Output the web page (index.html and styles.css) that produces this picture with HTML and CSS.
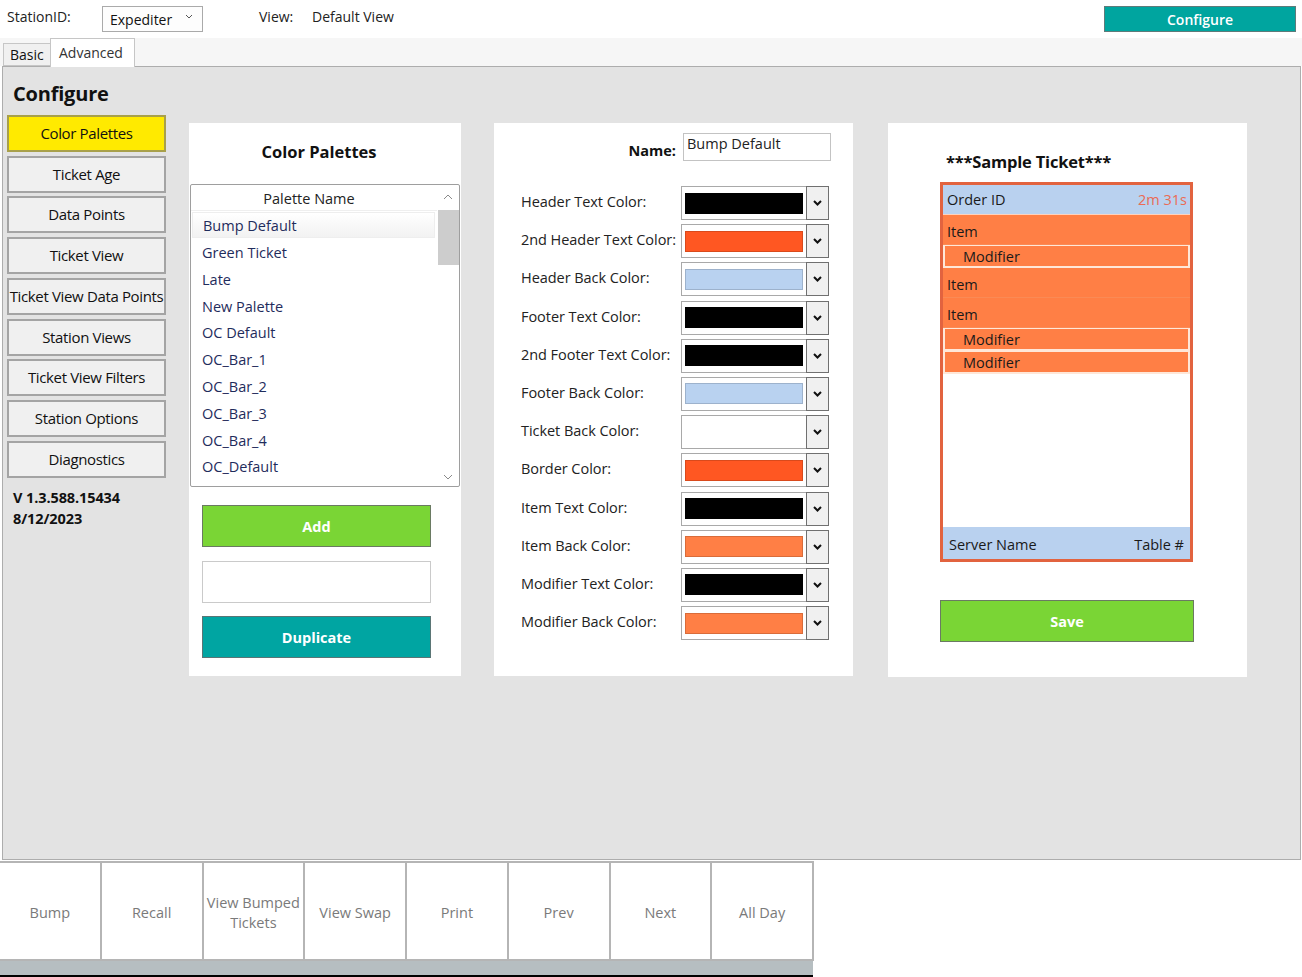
FILE: index.html
```html
<!DOCTYPE html>
<html>
<head>
<meta charset="utf-8">
<link rel="stylesheet" href="styles.css">
</head>
<body>
<div class="topbar">
  <span class="lbl station">StationID:</span>
  <div class="combo">
    <span>Expediter</span>
    <svg class="chev" width="8" height="5" viewBox="0 0 8 5"><path d="M1 1 L4 4 L7 1" fill="none" stroke="#555" stroke-width="1"/></svg>
  </div>
  <span class="lbl viewlbl">View:</span>
  <span class="lbl viewval">Default View</span>
  <button class="cfgbtn">Configure</button>
</div>
<div class="tabs">
  <div class="tab basic">Basic</div>
  <div class="tab adv">Advanced</div>
</div>
<div class="main">
  <div class="side">
    <h1 class="title">Configure</h1>
    <div class="navbtn sel">Color Palettes</div>
    <div class="navbtn">Ticket Age</div>
    <div class="navbtn">Data Points</div>
    <div class="navbtn">Ticket View</div>
    <div class="navbtn">Ticket View Data Points</div>
    <div class="navbtn">Station Views</div>
    <div class="navbtn">Ticket View Filters</div>
    <div class="navbtn">Station Options</div>
    <div class="navbtn">Diagnostics</div>
    <div class="ver">V 1.3.588.15434<br>8/12/2023</div>
  </div>

  <div class="card c1">
    <h2 class="ctitle">Color Palettes</h2>
    <div class="listbox">
      <div class="listmain">
        <div class="lhead">Palette Name</div>
        <div class="item selitem">Bump Default</div>
        <div class="item">Green Ticket</div>
        <div class="item">Late</div>
        <div class="item">New Palette</div>
        <div class="item">OC Default</div>
        <div class="item">OC_Bar_1</div>
        <div class="item">OC_Bar_2</div>
        <div class="item">OC_Bar_3</div>
        <div class="item">OC_Bar_4</div>
        <div class="item">OC_Default</div>
      </div>
      <div class="scroll">
        <svg class="sarrow" width="10" height="6" viewBox="0 0 10 6"><path d="M1 5 L5 1 L9 5" fill="none" stroke="#8a8a8a" stroke-width="1"/></svg>
        <div class="thumb"></div>
        <div class="track"></div>
        <svg class="sarrow" width="10" height="6" viewBox="0 0 10 6"><path d="M1 1 L5 5 L9 1" fill="none" stroke="#8a8a8a" stroke-width="1"/></svg>
      </div>
    </div>
    <button class="bigbtn green">Add</button>
    <div class="textbox"></div>
    <button class="bigbtn teal">Duplicate</button>
  </div>

  <div class="card c2">
    <div class="namerow">
      <span class="namelbl">Name:</span>
      <div class="nameinput">Bump Default</div>
    </div>
    <div class="colorgrid">
      <span class="clbl">Header Text Color:</span>
      <div class="ccombo"><div class="sw" style="background:#000000"></div><div class="dd"><svg width="9" height="6" viewBox="0 0 9 6"><path d="M1 1 L4.5 4.5 L8 1" fill="none" stroke="#111" stroke-width="2"/></svg></div></div>
      <span class="clbl">2nd Header Text Color:</span>
      <div class="ccombo"><div class="sw" style="background:#ff5722"></div><div class="dd"><svg width="9" height="6" viewBox="0 0 9 6"><path d="M1 1 L4.5 4.5 L8 1" fill="none" stroke="#111" stroke-width="2"/></svg></div></div>
      <span class="clbl">Header Back Color:</span>
      <div class="ccombo"><div class="sw" style="background:#b9d2f0"></div><div class="dd"><svg width="9" height="6" viewBox="0 0 9 6"><path d="M1 1 L4.5 4.5 L8 1" fill="none" stroke="#111" stroke-width="2"/></svg></div></div>
      <span class="clbl">Footer Text Color:</span>
      <div class="ccombo"><div class="sw" style="background:#000000"></div><div class="dd"><svg width="9" height="6" viewBox="0 0 9 6"><path d="M1 1 L4.5 4.5 L8 1" fill="none" stroke="#111" stroke-width="2"/></svg></div></div>
      <span class="clbl">2nd Footer Text Color:</span>
      <div class="ccombo"><div class="sw" style="background:#000000"></div><div class="dd"><svg width="9" height="6" viewBox="0 0 9 6"><path d="M1 1 L4.5 4.5 L8 1" fill="none" stroke="#111" stroke-width="2"/></svg></div></div>
      <span class="clbl">Footer Back Color:</span>
      <div class="ccombo"><div class="sw" style="background:#b9d2f0"></div><div class="dd"><svg width="9" height="6" viewBox="0 0 9 6"><path d="M1 1 L4.5 4.5 L8 1" fill="none" stroke="#111" stroke-width="2"/></svg></div></div>
      <span class="clbl">Ticket Back Color:</span>
      <div class="ccombo"><div class="sw empty"></div><div class="dd"><svg width="9" height="6" viewBox="0 0 9 6"><path d="M1 1 L4.5 4.5 L8 1" fill="none" stroke="#111" stroke-width="2"/></svg></div></div>
      <span class="clbl">Border Color:</span>
      <div class="ccombo"><div class="sw" style="background:#ff5722"></div><div class="dd"><svg width="9" height="6" viewBox="0 0 9 6"><path d="M1 1 L4.5 4.5 L8 1" fill="none" stroke="#111" stroke-width="2"/></svg></div></div>
      <span class="clbl">Item Text Color:</span>
      <div class="ccombo"><div class="sw" style="background:#000000"></div><div class="dd"><svg width="9" height="6" viewBox="0 0 9 6"><path d="M1 1 L4.5 4.5 L8 1" fill="none" stroke="#111" stroke-width="2"/></svg></div></div>
      <span class="clbl">Item Back Color:</span>
      <div class="ccombo"><div class="sw" style="background:#ff7f45"></div><div class="dd"><svg width="9" height="6" viewBox="0 0 9 6"><path d="M1 1 L4.5 4.5 L8 1" fill="none" stroke="#111" stroke-width="2"/></svg></div></div>
      <span class="clbl">Modifier Text Color:</span>
      <div class="ccombo"><div class="sw" style="background:#000000"></div><div class="dd"><svg width="9" height="6" viewBox="0 0 9 6"><path d="M1 1 L4.5 4.5 L8 1" fill="none" stroke="#111" stroke-width="2"/></svg></div></div>
      <span class="clbl">Modifier Back Color:</span>
      <div class="ccombo"><div class="sw" style="background:#ff7f45"></div><div class="dd"><svg width="9" height="6" viewBox="0 0 9 6"><path d="M1 1 L4.5 4.5 L8 1" fill="none" stroke="#111" stroke-width="2"/></svg></div></div>
    </div>
  </div>

  <div class="card c3">
    <h2 class="stitle">***Sample Ticket***</h2>
    <div class="ticket">
      <div class="thead"><span>Order ID</span><span class="time">2m 31s</span></div>
      <div class="titems">
        <div class="trow">Item</div>
        <div class="tmod">Modifier</div>
        <div class="trow">Item</div>
        <div class="trow">Item</div>
        <div class="tmod">Modifier</div>
        <div class="tmod">Modifier</div>
      </div>
      <div class="tbody"></div>
      <div class="tfoot"><span>Server Name</span><span>Table #</span></div>
    </div>
    <button class="bigbtn green save">Save</button>
  </div>
</div>
<div class="bottom">
  <div class="bbtns">
    <div class="bbtn">Bump</div>
    <div class="bbtn">Recall</div>
    <div class="bbtn">View Bumped Tickets</div>
    <div class="bbtn">View Swap</div>
    <div class="bbtn">Print</div>
    <div class="bbtn">Prev</div>
    <div class="bbtn">Next</div>
    <div class="bbtn">All Day</div>
  </div>
  <div class="bstrip"></div>
</div>
</body>
</html>
```
FILE: styles.css
```css
* { box-sizing: border-box; }
html, body { margin: 0; padding: 0; }
body {
  width: 1302px;
  height: 977px;
  overflow: hidden;
  background: #ffffff;
  font-family: "Open Sans", "Noto Sans", sans-serif;
  font-size: 14px;
  color: #1a1a1a;
}
h1, h2 { margin: 0; }
button { font-family: inherit; cursor: default; }

/* top bar */
.topbar {
  height: 38px;
  display: flex;
  align-items: center;
}
.lbl { font-size: 14px; color: #222; }
.station { margin-left: 7px; width: 95px; margin-top: -5px; }
.combo {
  width: 101px;
  height: 26px;
  border: 1px solid #aaaaaa;
  background: #fdfdfd;
  display: flex;
  align-items: center;
  justify-content: space-between;
  padding: 1px 9px 0 7px;
  font-size: 14px;
  color: #111;
}
.chev { margin-top: -6px; }
.viewlbl { margin-left: 56px; margin-top: -5px; width: 53px; }
.viewval { margin-top: -5px; }
.cfgbtn {
  margin-left: auto;
  margin-right: 6px;
  width: 192px;
  height: 26px;
  background: #00a59f;
  border: 1px solid #5e7b7a;
  color: #ffffff;
  font-size: 14px;
  font-weight: 600;
  padding: 0;
}

/* tabs */
.tabs {
  height: 28px;
  background: #f6f6f6;
  display: flex;
  align-items: flex-end;
  padding-left: 3px;
  position: relative;
  z-index: 1;
}
.tab {
  font-size: 14px;
  color: #111;
  border: 1px solid #c6c6c6;
}
.basic {
  height: 23px;
  width: 47px;
  background: #f0f0f0;
  border-right: none;
  padding: 1px 0 0 6px;
}
.adv {
  height: 29px;
  width: 85px;
  background: #ffffff;
  border-bottom: none;
  padding: 4px 0 0 8px;
  margin-bottom: -1px;
  color: #333;
}

/* main */
.main {
  height: 794px;
  margin: 0 1px 0 2px;
  border: 1px solid #adadad;
  background: #e3e3e3;
  display: flex;
  align-items: flex-start;
}
.side {
  width: 164px;
  padding: 15px 0 0 4px;
  display: flex;
  flex-direction: column;
  gap: 3.75px;
}
.title {
  font-size: 20px;
  font-weight: 700;
  line-height: 24px;
  margin: 0 0 5px 6px;
  color: #111;
  letter-spacing: -0.2px;
}
.navbtn {
  width: 159px;
  height: 37px;
  border: 2px solid #a4a4a4;
  background: #f0f0f0;
  display: flex;
  align-items: center;
  justify-content: center;
  font-size: 15px;
  color: #111;
  white-space: nowrap;
  letter-spacing: -0.35px;
  padding-bottom: 1px;
}
.navbtn.sel {
  background: #ffea00;
  border-color: #a8a04a;
}
.ver {
  margin: 5px 0 0 6px;
  font-size: 14.5px;
  font-weight: 700;
  line-height: 21px;
  color: #111;
  letter-spacing: -0.1px;
}

/* cards */
.card {
  background: #ffffff;
  margin-top: 56px;
}
.c1 {
  width: 272px;
  height: 553px;
  margin-left: 22px;
  display: flex;
  flex-direction: column;
  align-items: flex-start;
  padding-top: 17px;
}
.ctitle {
  align-self: center;
  margin-right: 12px;
  font-size: 16.5px;
  font-weight: 700;
  line-height: 24px;
  color: #111;
  margin-bottom: 20px;
}
.listbox {
  margin-left: 1px;
  width: 270px;
  height: 303px;
  border: 1px solid #9e9e9e;
  display: flex;
  border-radius: 2px;
}
.listmain { flex: 1; }
.lhead {
  height: 26px;
  line-height: 26px;
  text-align: center;
  font-size: 14.5px;
  color: #222;
  border-bottom: 1px solid #efefef;
  padding-right: 10px;
  padding-top: 1px;
}
.item {
  height: 26.8px;
  line-height: 26.8px;
  padding: 2px 0 0 11px;
  font-size: 14.5px;
  color: #1f2c5c;
}
.selitem {
  margin: 1px 2px 0 1px;
  border: 1px solid #eeeeee;
  background: linear-gradient(#ffffff, #f2f2f2);
  line-height: 24px;
  height: 26px;
  padding: 1px 0 0 10px;
}
.scroll {
  width: 22px;
  display: flex;
  flex-direction: column;
  align-items: center;
  padding: 9px 0 6px;
}
.sarrow { flex: none; }
.thumb {
  width: 21px;
  height: 55px;
  background: #cdcdcd;
  margin-top: 10px;
}
.track { flex: 1; }
.bigbtn {
  width: 229px;
  height: 42px;
  color: #ffffff;
  font-size: 14.5px;
  font-weight: 700;
  padding: 0;
  border: 1px solid #6a7a62;
}
.c1 .bigbtn, .c1 .textbox { margin-left: 13px; }
.green { background: #7ad535; margin-top: 18px; }
.teal { background: #00a5a2; border-color: #5a7575; margin-top: 13px; }
.textbox {
  width: 229px;
  height: 42px;
  border: 1px solid #cacaca;
  margin-top: 14px;
}

.c2 {
  width: 359px;
  height: 553px;
  margin-left: 33px;
  padding: 10px 0 0 27px;
}
.namerow {
  display: flex;
  align-items: center;
  height: 28px;
}
.namelbl {
  width: 155px;
  text-align: right;
  font-weight: 700;
  font-size: 14.5px;
  color: #111;
  padding-top: 7px;
}
.nameinput {
  width: 148px;
  height: 28px;
  margin-left: 7px;
  border: 1px solid #c3c3c3;
  font-size: 14.5px;
  padding: 0 0 0 3px;
  color: #222;
}
.colorgrid {
  margin-top: 25px;
  display: grid;
  grid-template-columns: 160px 148px;
  row-gap: 4.2px;
  align-items: center;
}
.clbl {
  font-size: 14.5px;
  color: #222;
  letter-spacing: -0.05px;
  padding-bottom: 3px;
}
.ccombo {
  height: 34px;
  border: 1px solid #a9a9a9;
  display: flex;
  align-items: center;
  padding-left: 3px;
}
.sw {
  width: 118px;
  height: 21px;
  border: 1px solid rgba(0,0,0,0.15);
}
.sw.empty { border: none; }
.dd {
  margin-left: auto;
  width: 23px;
  height: 34px;
  margin-top: -1px;
  margin-bottom: -1px;
  margin-right: -1px;
  border: 1px solid #707070;
  background: #f0f0f0;
  display: flex;
  align-items: center;
  justify-content: center;
}

.c3 {
  width: 359px;
  height: 554px;
  margin-left: 35px;
  padding: 28px 0 0 52px;
}
.stitle {
  font-size: 16.5px;
  font-weight: 700;
  line-height: 22px;
  color: #111;
  margin-left: 6px;
  height: 31px;
  letter-spacing: -0.2px;
}
.ticket {
  width: 253px;
  height: 380px;
  border: 3px solid #e2633f;
  display: flex;
  flex-direction: column;
  font-size: 14.5px;
  color: #1a1a1a;
}
.thead {
  height: 30px;
  background: #b9d1ef;
  display: flex;
  justify-content: space-between;
  align-items: center;
  padding: 0 3px 0 4px;
  border-bottom: 1px solid #ffd2bd;
}
.time { color: #ea6b55; }
.titems { background: #ff7f45; }
.trow {
  height: 30px;
  line-height: 30px;
  padding: 2px 0 0 4px;
  border-bottom: 1px solid #fa8a55;
}
.tmod {
  height: 23px;
  line-height: 20px;
  padding: 1px 0 0 18px;
  border: 2px solid #ffe7d8;
  border-top-width: 1px;
}
.tbody { flex: 1; background: #ffffff; }
.tfoot {
  height: 32px;
  background: #b9d1ef;
  display: flex;
  justify-content: space-between;
  align-items: center;
  padding: 2px 6px 0 6px;
}
.save { width: 254px; margin-top: 38px; }

/* bottom */
.bottom {
  width: 815px;
  margin-top: 1px;
}
.bbtns { display: flex; }
.bbtn {
  width: 101.75px;
  height: 100px;
  border: 2px solid #b5b5b5;
  border-left: none;
  display: flex;
  align-items: center;
  justify-content: center;
  text-align: center;
  font-size: 14.5px;
  color: #7a7a7a;
  line-height: 20px;
  padding: 3px 2px 0;
  background: #ffffff;
}
.bstrip {
  height: 16px;
  background: #b6bec1;
  border-bottom: 2px solid #000000;
  margin-right: 2px;
}
```
